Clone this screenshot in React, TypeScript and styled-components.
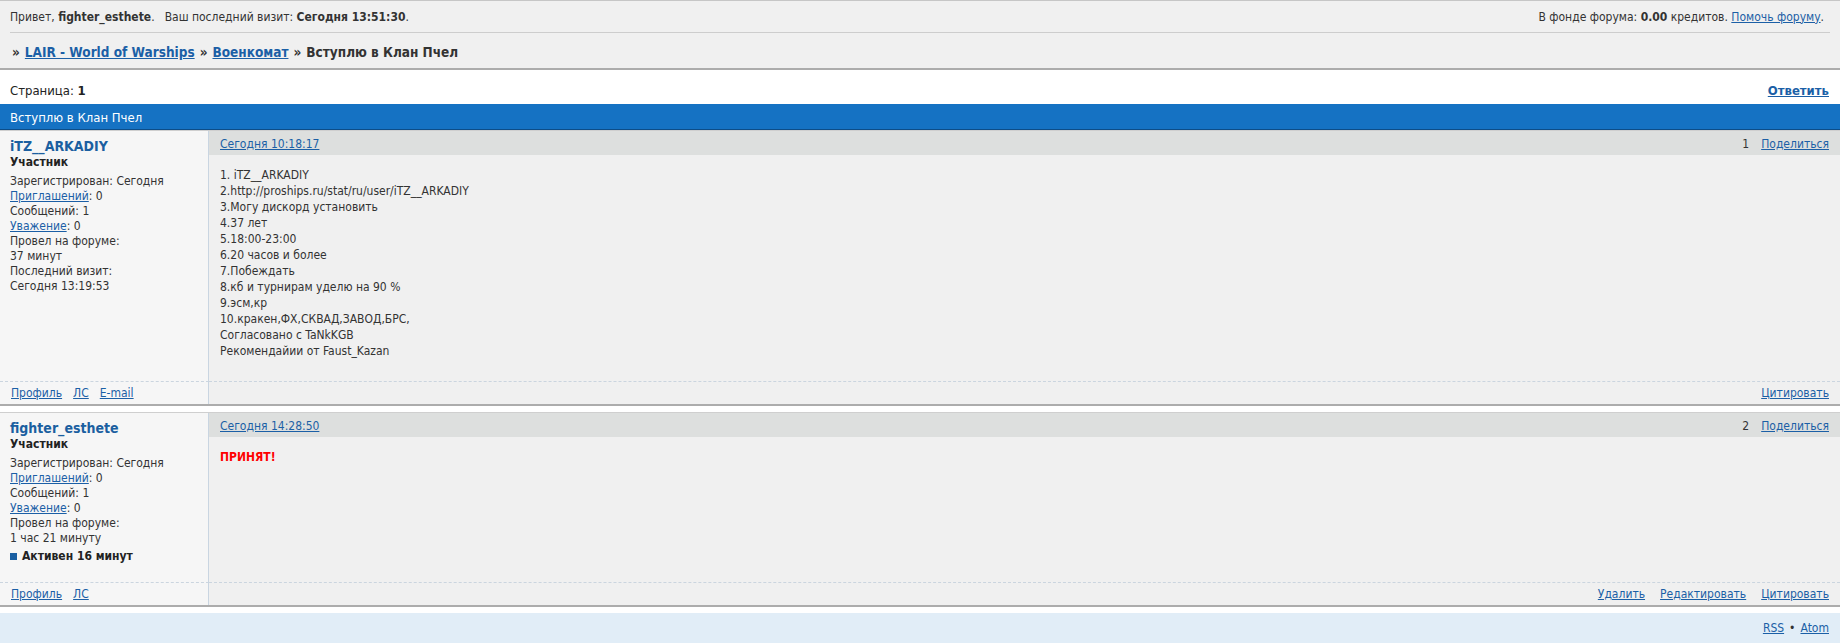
import React from 'react'
import styled, { createGlobalStyle } from 'styled-components'

// Types

interface IAuthor {
  name: string
  role: string
  spent: string
  lastVisit?: string
  active?: string
  links: string[]
}

interface IPost {
  id: number
  date: string
  author: IAuthor
  body: React.ReactNode
  actions: string[]
}

// Global

const GlobalStyle = createGlobalStyle`
  body {
    margin: 0;
    background: #ffffff;
    color: #333333;
    font-family: "DejaVu Sans Condensed", "DejaVu Sans", Verdana, sans-serif;
    font-size: 12px;
  }
  a {
    color: #1b5fa6;
    text-decoration: underline;
  }
`

// Header

const Header = styled.div`
  background: #f0f0f0;
  border-top: 1px solid #c6c6c6;
  border-bottom: 2px solid #acacac;
  padding: 0 10px;
`

const UserBar = styled.div`
  display: flex;
  justify-content: space-between;
  align-items: center;
  height: 31px;
  border-bottom: 1px solid #cdcdcd;
  padding-right: 6px;
`

const Spacer = styled.span`
  margin-left: 10px;
`

const Crumbs = styled.div`
  display: flex;
  align-items: center;
  box-sizing: border-box;
  height: 35px;
  padding: 3px 2px 0;
  font-size: 13.5px;
  font-weight: bold;
  color: #333333;
  gap: 5px;
`

const PageBar = styled.div`
  display: flex;
  justify-content: space-between;
  align-items: center;
  box-sizing: border-box;
  height: 34px;
  padding: 7px 11px 0 10px;
  font-size: 13px;
  color: #222222;
`

const ReplyLink = styled.a`
  font-weight: bold;
`

const TopicTitle = styled.div`
  display: flex;
  align-items: center;
  box-sizing: border-box;
  height: 26px;
  padding: 2px 10px 0;
  background: #1572c3;
  border-bottom: 1px solid #0d4d88;
  color: #ffffff;
  font-size: 13px;
`

// Post

const Post = styled.div`
  display: grid;
  grid-template-columns: 209px 1fr;
  border-top: 1px solid #cfcfcf;
  border-bottom: 2px solid #acacac;
  margin-bottom: 6px;

  &:last-of-type {
    margin-bottom: 2px;
  }
`

const AuthorCell = styled.div`
  background: #f6f6f6;
  border-right: 1px solid #c9d5e1;
  padding: 7px 10px 18px;
`

const Username = styled.div`
  font-size: 14px;
  font-weight: bold;
  line-height: 17px;
  color: #1b5fa0;
`

const Role = styled.div`
  font-weight: bold;
  line-height: 15px;
  color: #222222;
`

const Info = styled.div`
  margin-top: 4px;
  line-height: 15px;
`

const Active = styled.div`
  display: flex;
  align-items: center;
  gap: 5px;
  margin-top: 3px;
  line-height: 15px;
  font-weight: bold;
  color: #222222;

  &::before {
    content: '';
    width: 7px;
    height: 7px;
    background: #1a5fa2;
  }
`

const MessageCell = styled.div`
  background: #f0f0f0;
`

const MessageHead = styled.div`
  display: flex;
  justify-content: space-between;
  align-items: center;
  box-sizing: border-box;
  height: 24px;
  padding: 2px 11px 0;
  background: #dddfde;
`

const HeadRight = styled.div`
  display: flex;
  gap: 12px;
`

const MessageBody = styled.div`
  padding: 12px 11px 22px;
  line-height: 16px;
`

const Accepted = styled.span`
  color: #ff0000;
  font-weight: bold;
`

const FootCell = styled.div<{ side: 'left' | 'right' }>`
  display: flex;
  justify-content: ${props => (props.side === 'left' ? 'flex-start' : 'flex-end')};
  align-items: center;
  gap: ${props => (props.side === 'left' ? '11px' : '15px')};
  box-sizing: border-box;
  height: 23px;
  padding: 0 11px;
  border-top: 1px dashed #cbd5df;
  background: ${props => (props.side === 'left' ? '#f6f6f6' : '#f0f0f0')};
  border-right: ${props => (props.side === 'left' ? '1px solid #c9d5e1' : 'none')};
`

const Footer = styled.div`
  display: flex;
  justify-content: flex-end;
  align-items: center;
  gap: 5px;
  height: 30px;
  padding: 0 11px;
  background: #e1edf7;
  border-bottom: 2px solid #b4b4b4;
`

// Data

const posts: IPost[] = [
  {
    id: 1,
    date: 'Сегодня 10:18:17',
    author: {
      name: 'iTZ__ARKADIY',
      role: 'Участник',
      spent: '37 минут',
      lastVisit: 'Сегодня 13:19:53',
      links: ['Профиль', 'ЛС', 'E-mail'],
    },
    body: (
      <>
        1. iTZ__ARKADIY
        <br />
        2.http://proships.ru/stat/ru/user/iTZ__ARKADIY
        <br />
        3.Могу дискорд установить
        <br />
        4.37 лет
        <br />
        5.18:00-23:00
        <br />
        6.20 часов и более
        <br />
        7.Побеждать
        <br />
        8.кб и турнирам уделю на 90 %
        <br />
        9.эсм,кр
        <br />
        10.кракен,ФХ,СКВАД,ЗАВОД,БРС,
        <br />
        Согласовано с TaNkKGB
        <br />
        Рекомендайии от Faust_Kazan
      </>
    ),
    actions: ['Цитировать'],
  },
  {
    id: 2,
    date: 'Сегодня 14:28:50',
    author: {
      name: 'fighter_esthete',
      role: 'Участник',
      spent: '1 час 21 минуту',
      active: 'Активен 16 минут',
      links: ['Профиль', 'ЛС'],
    },
    body: <Accepted>ПРИНЯТ!</Accepted>,
    actions: ['Удалить', 'Редактировать', 'Цитировать'],
  },
]

// Component

export default function App() {
  return (
    <>
      <GlobalStyle />
      <Header>
        <UserBar>
          <span>
            Привет, <b>fighter_esthete</b>.<Spacer>Ваш последний визит: </Spacer>
            <b>Сегодня 13:51:30</b>.
          </span>
          <span>
            В фонде форума: <b>0.00</b> кредитов. <a href="#">Помочь форуму</a>.
          </span>
        </UserBar>
        <Crumbs>
          <span>»</span>
          <a href="#">LAIR - World of Warships</a>
          <span>»</span>
          <a href="#">Военкомат</a>
          <span>»</span>
          <span>Вступлю в Клан Пчел</span>
        </Crumbs>
      </Header>
      <PageBar>
        <span>
          Страница: <b>1</b>
        </span>
        <ReplyLink href="#">Ответить</ReplyLink>
      </PageBar>
      <TopicTitle>Вступлю в Клан Пчел</TopicTitle>
      {posts.map(post => (
        <Post key={post.id}>
          <AuthorCell>
            <Username>{post.author.name}</Username>
            <Role>{post.author.role}</Role>
            <Info>
              Зарегистрирован: Сегодня
              <br />
              <a href="#">Приглашений</a>: 0
              <br />
              Сообщений: 1
              <br />
              <a href="#">Уважение</a>: 0
              <br />
              Провел на форуме:
              <br />
              {post.author.spent}
              {post.author.lastVisit && (
                <>
                  <br />
                  Последний визит:
                  <br />
                  {post.author.lastVisit}
                </>
              )}
            </Info>
            {post.author.active && <Active>{post.author.active}</Active>}
          </AuthorCell>
          <MessageCell>
            <MessageHead>
              <a href="#">{post.date}</a>
              <HeadRight>
                <span>{post.id}</span>
                <a href="#">Поделиться</a>
              </HeadRight>
            </MessageHead>
            <MessageBody>{post.body}</MessageBody>
          </MessageCell>
          <FootCell side="left">
            {post.author.links.map(l => (
              <a key={l} href="#">
                {l}
              </a>
            ))}
          </FootCell>
          <FootCell side="right">
            {post.actions.map(a => (
              <a key={a} href="#">
                {a}
              </a>
            ))}
          </FootCell>
        </Post>
      ))}
      <Footer>
        <a href="#">RSS</a>
        <span>•</span>
        <a href="#">Atom</a>
      </Footer>
    </>
  )
}
